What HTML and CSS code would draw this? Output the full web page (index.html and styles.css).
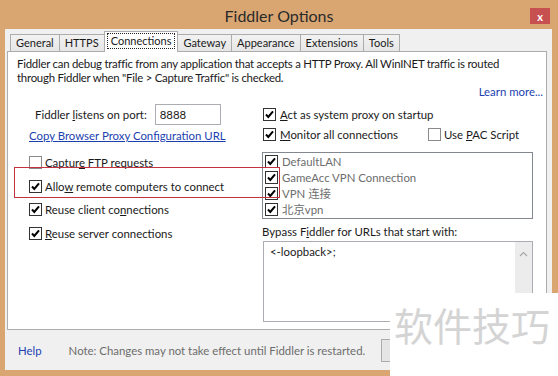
FILE: index.html
```html
<!DOCTYPE html>
<html lang="en">
<head>
    <meta charset="UTF-8">
    <title>Fiddler Options</title>
    <link rel="stylesheet" href="styles.css">
</head>
<body>
    <div class="window">
        <div class="titlebar">
            <span></span>
            <div class="title">Fiddler Options</div>
            <div class="close">x</div>
        </div>

        <div class="client">
            <div class="tabs">
                <div class="tab">General</div>
                <div class="tab">HTTPS</div>
                <div class="tab active"><span class="focus">Connections</span></div>
                <div class="tab">Gateway</div>
                <div class="tab">Appearance</div>
                <div class="tab">Extensions</div>
                <div class="tab">Tools</div>
            </div>

            <div class="panel">
                <p class="intro">Fiddler can debug traffic from any application that accepts a HTTP Proxy. All WinINET traffic is routed<br>through Fiddler when "File &gt; Capture Traffic" is checked.</p>
                <div class="learn"><a class="link">Learn more...</a></div>

                <div class="cols">
                    <!-- left column -->
                    <div class="col">
                        <div class="port-row">
                            <span>Fiddler <u>l</u>istens on port:</span>
                            <div class="port-input">8888</div>
                        </div>
                        <a class="link copy-link">Copy Browser Proxy Configuration URL</a>

                        <div class="check-row ftp">
                            <span class="cb"></span>
                            <span>Captur<u>e</u> FTP requests</span>
                        </div>
                        <div class="check-row remote">
                            <span class="cb checked"><svg viewBox="0 0 11 11"><path d="M2 5.5 L4.3 8 L9 2.3"/></svg></span>
                            <span>Allo<u>w</u> remote computers to connect</span>
                        </div>
                        <div class="check-row client-conn">
                            <span class="cb checked"><svg viewBox="0 0 11 11"><path d="M2 5.5 L4.3 8 L9 2.3"/></svg></span>
                            <span>Reuse client co<u>n</u>nections</span>
                        </div>
                        <div class="check-row server-conn">
                            <span class="cb checked"><svg viewBox="0 0 11 11"><path d="M2 5.5 L4.3 8 L9 2.3"/></svg></span>
                            <span><u>R</u>euse server connections</span>
                        </div>
                    </div>

                    <!-- right column -->
                    <div class="col right">
                        <div class="check-row tall">
                            <span class="cb checked"><svg viewBox="0 0 11 11"><path d="M2 5.5 L4.3 8 L9 2.3"/></svg></span>
                            <span><u>A</u>ct as system proxy on startup</span>
                        </div>
                        <div class="check-row monitor">
                            <div class="check-item wide">
                                <span class="cb checked"><svg viewBox="0 0 11 11"><path d="M2 5.5 L4.3 8 L9 2.3"/></svg></span>
                                <span><u>M</u>onitor all connections</span>
                            </div>
                            <div class="check-item">
                                <span class="cb"></span>
                                <span>Use <u>P</u>AC Script</span>
                            </div>
                        </div>

                        <div class="listbox">
                            <div class="list-item">
                                <span class="cb checked"><svg viewBox="0 0 11 11"><path d="M2 5.5 L4.3 8 L9 2.3"/></svg></span>
                                <span>DefaultLAN</span>
                            </div>
                            <div class="list-item">
                                <span class="cb checked"><svg viewBox="0 0 11 11"><path d="M2 5.5 L4.3 8 L9 2.3"/></svg></span>
                                <span>GameAcc VPN Connection</span>
                            </div>
                            <div class="list-item">
                                <span class="cb checked"><svg viewBox="0 0 11 11"><path d="M2 5.5 L4.3 8 L9 2.3"/></svg></span>
                                <span>VPN 连接</span>
                            </div>
                            <div class="list-item">
                                <span class="cb checked"><svg viewBox="0 0 11 11"><path d="M2 5.5 L4.3 8 L9 2.3"/></svg></span>
                                <span>北京vpn</span>
                            </div>
                        </div>

                        <div class="bypass-label">Bypass F<u>i</u>ddler for URLs that start with:</div>
                        <div class="textarea">
                            <div class="textarea-text">&lt;-loopback&gt;;</div>
                            <div class="scrollbar">
                                <svg viewBox="0 0 9 6"><path d="M1 5 L4.5 1.5 L8 5"/></svg>
                            </div>
                        </div>
                    </div>
                </div>
            </div>

            <div class="footer">
                <a class="help">Help</a>
                <span class="note">Note: Changes may not take effect until Fiddler is restarted.</span>
                <div class="btn"></div>
            </div>
        </div>

        <div class="highlight"></div>
        <div class="watermark">软件技巧</div>
    </div>
</body>
</html>
```

FILE: styles.css
```css
* {
    box-sizing: border-box;
}

body {
    margin: 0;
    font-family: Lato, "Noto Sans CJK SC", sans-serif;
    font-size: 11.4px;
    color: #1a1a1a;
}

.window {
    width: 558px;
    height: 376px;
    background-color: #d9a672;
    display: flex;
    flex-direction: column;
    position: relative;
    overflow: hidden;
}

.titlebar {
    height: 29px;
    display: grid;
    grid-template-columns: 1fr auto 1fr;
    align-items: center;
}

.title {
    font-size: 16px;
    color: #2a2a2a;
    margin-top: 1px;
}

.close {
    justify-self: end;
    margin-right: 8px;
    margin-top: 3px;
    width: 20px;
    height: 16px;
    background-color: #c75050;
    color: #fff;
    font-size: 11px;
    font-weight: bold;
    display: flex;
    align-items: center;
    justify-content: center;
}

.client {
    flex: 1;
    margin: 0 6px 6px 5px;
    background-color: #f0f0f0;
    display: flex;
    flex-direction: column;
}

/* tab strip */
.tabs {
    height: 22px;
    display: flex;
    align-items: flex-end;
    padding-left: 5px;
    font-size: 11px;
}

.tab {
    height: 17px;
    line-height: 16px;
    padding: 0 5px;
    border: 1px solid #acacac;
    border-bottom: none;
    background: linear-gradient(#f2f2f2, #e6e6e6);
    margin-right: -1px;
}

.tab.active {
    height: 21px;
    padding: 1px 2px 0;
    background: #fff;
    margin-bottom: -1px;
    position: relative;
    z-index: 1;
}

.focus {
    display: block;
    height: 16px;
    line-height: 14px;
    padding: 0 3px;
    border: 1px dotted #222;
}

/* connections page */
.panel {
    height: 279px;
    margin: 0 5px 0 2px;
    background-color: #fff;
    border: 1px solid #acacac;
    padding: 5px 3px 0 9px;
}

.intro {
    margin: 0;
    line-height: 14px;
    letter-spacing: -0.24px;
    white-space: nowrap;
}

.learn {
    text-align: right;
    line-height: 14px;
}

.link {
    color: #1c3fb0;
}

.cols {
    margin-top: 5px;
    display: grid;
    grid-template-columns: 245px 271px;
}

.col {
    display: flex;
    flex-direction: column;
    align-items: flex-start;
}

.port-row {
    height: 21px;
    display: flex;
    align-items: center;
    gap: 8px;
    padding-left: 18px;
}

.port-input {
    width: 66px;
    height: 21px;
    border: 1px solid #abadb3;
    padding-left: 4px;
    line-height: 19px;
}

.copy-link {
    margin: 4px 0 0 12px;
    line-height: 14px;
    text-decoration: underline;
}

.check-row {
    height: 16px;
    display: flex;
    align-items: center;
    gap: 3px;
    padding-left: 12px;
}

.check-row.ftp { margin-top: 11px; }
.check-row.remote { margin-top: 8px; }
.check-row.client-conn { margin-top: 7px; }
.check-row.server-conn { margin-top: 8px; }

.col.right .check-row {
    padding-left: 1px;
    gap: 4px;
}

.check-row.tall {
    height: 21px;
}

.check-row.monitor {
    margin-top: 1px;
}

.check-item {
    display: flex;
    align-items: center;
    gap: 3px;
}

.check-item.wide {
    width: 161px;
    gap: 4px;
}

.cb {
    width: 13px;
    height: 13px;
    flex: none;
    border: 1px solid #8a8a8a;
    background-color: #fff;
    display: flex;
}

.cb.checked {
    border-color: #333;
}

.cb svg {
    width: 11px;
    height: 11px;
}

.cb path {
    fill: none;
    stroke: #000;
    stroke-width: 2;
}

.listbox {
    margin-top: 10px;
    width: 271px;
    height: 67px;
    border: 1px solid #828790;
    padding-left: 2px;
}

.list-item {
    height: 16px;
    display: flex;
    align-items: center;
    gap: 4px;
    color: #6d6d6d;
}

.bypass-label {
    margin-top: 6px;
    line-height: 14px;
}

.textarea {
    margin: 2px 0 0 1px;
    width: 270px;
    height: 81px;
    border: 1px solid #abadb3;
    display: flex;
}

.textarea-text {
    flex: 1;
    padding: 3px 6px;
}

.scrollbar {
    width: 17px;
    background-color: #ececec;
    display: flex;
    justify-content: center;
    padding-top: 9px;
}

.scrollbar svg {
    width: 9px;
    height: 6px;
}

.scrollbar path {
    fill: none;
    stroke: #a8a8a8;
    stroke-width: 1.2;
}

/* bottom bar */
.footer {
    flex: 1;
    display: flex;
    align-items: center;
    padding-left: 13px;
}

.help {
    color: #1c3fb0;
}

.note {
    margin-left: 27px;
    color: #6d6d6d;
}

.btn {
    margin-left: 16px;
    width: 75px;
    height: 23px;
    border: 1px solid #acacac;
    background-color: #e5e5e5;
}

/* annotation overlays */
.highlight {
    position: absolute;
    left: 14px;
    top: 167px;
    width: 266px;
    height: 31px;
    border: 1px solid #c3323f;
}

.watermark {
    position: absolute;
    left: 390px;
    top: 293px;
    right: 0;
    bottom: 0;
    background-color: #fff;
    color: #d4d4d4;
    font-family: "Noto Sans CJK SC", sans-serif;
    font-size: 39px;
    line-height: 1;
    padding: 12px 0 0 4px;
}
```
